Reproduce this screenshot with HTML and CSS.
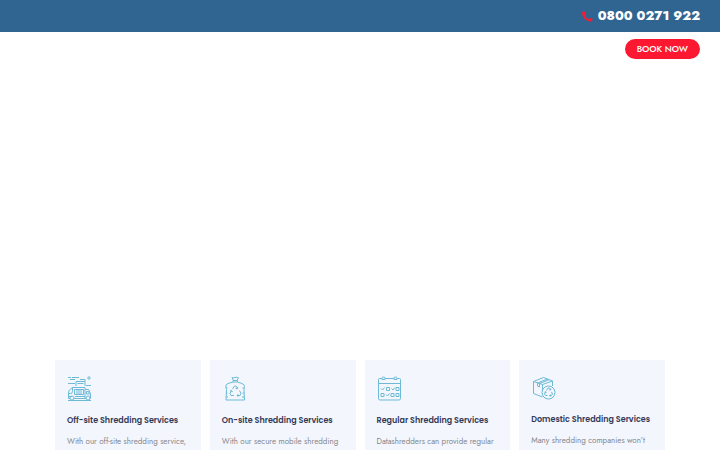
FILE: index.html
```html
<!DOCTYPE html>
<html lang="en">
<head>
    <meta charset="UTF-8">
    <meta name="viewport" content="width=device-width, initial-scale=1.0">
    <title>Datashredders</title>
    <link rel="stylesheet" href="styles.css">
</head>
<body>

<header>
    <div class="top-bar">
        <a class="phone" href="tel:08000271922">
            <svg class="phone-icon" viewBox="0 0 12 12" aria-hidden="true">
                <path d="M.6 1.2 2.9.5q.4-.1.6.3l1 2.4q.1.4-.2.7L3.1 4.9q1.3 2.7 4 4l1-1.3q.3-.3.7-.1l2.4 1q.4.2.3.6l-.6 2.3q-.1.4-.6.4Q6 11.500 3 8.700 0 6 0 1.700q0-.4.6-.5z"/>
            </svg>
            0800 0271 922
        </a>
    </div>
    <nav class="nav-bar">
        <a class="book-button" href="#book">BOOK NOW</a>
    </nav>
</header>

<main>
    <section class="hero"></section>

    <section class="services">
        <article class="card">
            <svg class="card-icon" viewBox="0 0 25 25" aria-hidden="true">
                <path d="M1 1.500h3M5 1.500h7M3 3.500h5M1 7.500h7M19 9.500h5M9 10V5.500h9V10M10.500 7.500h6M13 3.500h5v2"/>
                <circle cx="22" cy="2" r="1.200"/>
                <path d="M3 22.500H1.500V17q0-2.500 2-4l2-1.500H18v11H7M18 13.500h3.500l2 4v5H23M18 22.500h1M19.500 15.500h2l1 2.500h-3zM5.500 11.500v4q0 2-2 2h-2M7.500 13.500h9v5h-9zM10 13.500v5M12 13.500v5M14 13.500v5M2 20.500h3M8 20.500h10M1 24.500h23"/>
                <circle cx="5" cy="22" r="2"/>
                <circle cx="21" cy="22" r="2"/>
            </svg>
            <h2>Off-site Shredding Services</h2>
            <p>With our off-site shredding service,</p>
        </article>
        <article class="card">
            <svg class="card-icon" viewBox="0 0 25 25" aria-hidden="true">
                <path d="M11.500 4.500 10 1.500q1.500.8 3 0t3.500.3L15 4.500M11 4.500h4.500v1.500H11zM11 6 6 7.500q-2.500.8-2.200 3.500l.7 2.500-.5 10.500h18.500L22 13.500l.5-3Q22.500 8.500 20 7.500L15.500 6M4 12h1.500M20.500 12H22M4 17h1.500M20.500 17H22M4 21h2M20 21h2"/>
                <path d="m10.500 13 2-3h1.500l1.500 2.500M15.700 11l-.2 1.800-1.800-.3M17.500 14.500l1.500 3-1 2h-3M16.200 18.200 15 19.500l1.300 1.200M12 19.500H9l-1-2 1.500-3M8 15l1.600-.6.8 1.700"/>
            </svg>
            <h2>On-site Shredding Services</h2>
            <p>With our secure mobile shredding</p>
        </article>
        <article class="card">
            <svg class="card-icon" viewBox="0 0 25 25" aria-hidden="true">
                <path d="M5 2.500H2.500q-1 0-1 1v19q0 1.500 1.500 1.500h19q1.500 0 1.500-1.500v-19q0-1-1-1H20M8 2.500h9M1.500 7.500h22M5 3.500V2q0-1 1.500-1T8 2v1.500zM17 3.500V2q0-1 1.500-1T20 2v1.500z"/>
                <path d="m4 12.500 1.500 1.500L7.500 11.500M9.500 11.500h3v3h-3zM14.500 12.500 16 14l2-2.500M19 11.500h3v3h-3zM4 17.500h3v3H4zM9 18.500l1.500 1.500 2-2.500M14 17.500h3v3h-3zM19 17.500h3v3h-3z"/>
            </svg>
            <h2>Regular Shredding Services</h2>
            <p>Datashredders can provide regular</p>
        </article>
        <article class="card">
            <svg class="card-icon card-icon-box" viewBox="0 0 25 24" aria-hidden="true">
                <path d="m2.500 5.500 10-4 9 3.500v5M2.500 5.500v12l9 3.500M2.500 5.500l9 3v6M11.500 8.500l10-3.500M6.500 7l10-4M6.500 7v3l2 1V7.500l9.500-3.800"/>
                <circle cx="17.500" cy="16.500" r="6.500"/>
                <path d="m15.500 14.500 1.500-2.500h1.500l1 2M19.700 12.500v1.500h-1.500M20.500 16l1 2-1 1.500h-2M19.500 18.500l-1 1 1 1M16.500 19.500h-2l-1-1.500 1-2M13.500 16.200l1.200-.5.6 1.300"/>
            </svg>
            <h2>Domestic Shredding Services</h2>
            <p>Many shredding companies won’t</p>
        </article>
    </section>
</main>

</body>
</html>
```
FILE: styles.css
```css
* {
    box-sizing: border-box;
}
body {
    display: flex;
    flex-direction: column;
    min-height: 100vh;
    margin: 0;
    background-color: #fff;
    font-family: Jost, Lato, sans-serif;
}
a {
    text-decoration: none;
}

/* Header */
.top-bar {
    display: flex;
    justify-content: flex-end;
    padding: 6px 20px;
    background-color: #306591;
}
.phone {
    display: flex;
    align-items: center;
    gap: 5px;
    color: #fff;
    font-size: 13px;
    font-weight: 800;
    line-height: 20px;
}
.phone-icon {
    width: 11px;
    height: 11px;
    fill: #f51c34;
}
.nav-bar {
    display: flex;
    justify-content: flex-end;
    padding: 7px 20px 6px;
}
.book-button {
    padding: 0 12px;
    border-radius: 10px;
    background-color: #fb1830;
    color: #fff;
    font-size: 9px;
    font-weight: 500;
    line-height: 20px;
}

/* Services */
main {
    display: flex;
    flex: 1;
    flex-direction: column;
}
.hero {
    min-height: 295px;
}
.services {
    display: grid;
    flex: 1;
    grid-template-columns: repeat(4, 1fr);
    gap: 9px;
    padding: 0 55px;
}
.card {
    padding: 16px 12px 0;
    background-color: #f3f6fc;
}
.card-icon {
    display: block;
    width: 25px;
    height: 25px;
    fill: none;
    stroke: #6dbad6;
    stroke-width: 1;
    stroke-linejoin: round;
}
.card-icon-box {
    height: 24px;
}
.card h2 {
    margin: 13px 0 7px;
    color: #343957;
    font-family: Poppins, Inter, sans-serif;
    font-size: 8px;
    font-weight: 600;
    line-height: 14px;
    white-space: nowrap;
}
.card p {
    margin: 0;
    color: #85878d;
    font-size: 8px;
    line-height: 13px;
    white-space: nowrap;
}
```
